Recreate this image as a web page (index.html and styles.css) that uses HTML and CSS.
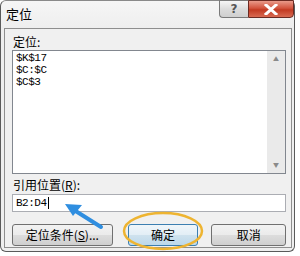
FILE: index.html
```html
<!DOCTYPE html>
<html lang="zh-CN">
<head>
    <meta charset="UTF-8">
    <title>定位</title>
    <link rel="stylesheet" href="styles.css">
</head>
<body>
    <div class="window">
        <div class="titlebar">
            <span class="title">定位</span>
            <div class="caption-buttons">
                <div class="btn-help">?</div>
                <div class="btn-close">
                    <svg width="14" height="11" viewBox="0 0 14 11">
                        <path d="M2 1 L12 10 M12 1 L2 10" stroke="#ffffff" stroke-width="3" stroke-linecap="square"/>
                    </svg>
                </div>
            </div>
        </div>
        <div class="client">
            <div class="label first">定位:</div>
            <div class="listbox">
                <div class="list-items">
                    <div>$K$17</div>
                    <div>$C:$C</div>
                    <div>$C$3</div>
                </div>
                <div class="scrollbar">
                    <span class="arrow">&#9650;</span>
                    <span class="arrow">&#9660;</span>
                </div>
            </div>
            <div class="label">引用位置(<u>R</u>):</div>
            <div class="textbox">B2:D4<span class="caret"></span></div>
            <div class="buttons">
                <div class="button wide">定位条件(<u>S</u>)...</div>
                <div class="button ok">确定</div>
                <div class="button cancel">取消</div>
            </div>
        </div>

        <!-- annotations drawn over the dialog -->
        <svg class="marks" width="295" height="252" viewBox="0 0 295 252">
            <ellipse cx="163" cy="231" rx="39" ry="18" fill="none" stroke="#eeb431" stroke-width="2.5"/>
            <path d="M101 227 L74 210" stroke="#2f8ee0" stroke-width="4" stroke-linecap="round"/>
            <path d="M65 204 L82 205 L73 216 Z" fill="#2f8ee0"/>
        </svg>
    </div>
</body>
</html>
```

FILE: styles.css
```css
body {
    margin: 0;
    background: #ffffff;
    font-family: "Noto Sans CJK SC", "Liberation Sans", sans-serif;
    font-size: 12px;
    color: #000;
}
.window {
    position: relative;
    width: 295px;
    height: 252px;
    box-sizing: border-box;
    border: 1px solid #5a5a5a;
    border-top-color: #8a8a8a;
    border-radius: 6px;
    background: linear-gradient(#f6f6f6, #eeeeee 28px);
    display: flex;
    flex-direction: column;
}
.titlebar {
    height: 27px;
    display: flex;
    justify-content: space-between;
    align-items: flex-start;
}
.title {
    padding: 5px 0 0 5px;
    font-size: 13px;
    line-height: 16px;
}
.caption-buttons {
    display: flex;
    margin-top: -1px;
}
.btn-help {
    width: 29px;
    height: 18px;
    box-sizing: border-box;
    border: 1px solid #7a7a7a;
    border-right: none;
    border-radius: 0 0 0 4px;
    background: linear-gradient(#f6f6f6, #dcdcdc 50%, #cfcfcf);
    color: #555;
    font-family: "DejaVu Sans", sans-serif;
    font-size: 12px;
    font-weight: bold;
    text-align: center;
    line-height: 17px;
}
.btn-close {
    width: 46px;
    height: 18px;
    box-sizing: border-box;
    border: 1px solid #6b2a22;
    border-radius: 0 0 4px 0;
    background: linear-gradient(#e99a8a, #d2533d 45%, #c23a22 55%, #d86a52);
    display: flex;
    align-items: center;
    justify-content: center;
}
.client {
    flex: 1;
    margin: 0 2px 3px 3px;
    border: 1px solid #8e8e8e;
    background: #f0f0f0;
    padding: 0 5px 0 7px;
    display: flex;
    flex-direction: column;
}
.label {
    height: 17px;
    line-height: 17px;
    margin-top: 2px;
    padding-left: 1px;
}
.label.first {
    margin-top: 4px;
}
.listbox {
    height: 124px;
    box-sizing: border-box;
    border: 1px solid #82878f;
    background: #fff;
    display: flex;
}
.list-items {
    flex: 1;
    padding: 1px 0 0 3px;
    font-family: "Liberation Mono", "DejaVu Sans Mono", monospace;
    font-size: 11px;
    letter-spacing: -0.5px;
    line-height: 12px;
}
.scrollbar {
    width: 18px;
    background: #eaeaea;
    display: flex;
    flex-direction: column;
    justify-content: space-between;
    align-items: center;
    padding: 4px 0;
}
.arrow {
    color: #8a8a8a;
    font-size: 6px;
    line-height: 8px;
}
.textbox {
    height: 18px;
    box-sizing: border-box;
    border: 1px solid #abadb3;
    background: #fff;
    margin-top: 1px;
    padding-left: 3px;
    font-family: "Liberation Mono", "DejaVu Sans Mono", monospace;
    font-size: 11px;
    letter-spacing: -0.5px;
    line-height: 16px;
    display: flex;
    align-items: center;
}
.caret {
    width: 1px;
    height: 12px;
    background: #000;
    margin-left: 1px;
}
.buttons {
    display: flex;
    margin-top: 12px;
}
.button {
    height: 22px;
    box-sizing: border-box;
    border: 1px solid #707070;
    border-radius: 3px;
    background: linear-gradient(#f2f2f2, #ebebeb 50%, #dddddd 50%, #cfcfcf);
    text-align: center;
    line-height: 20px;
}
.button.wide {
    width: 101px;
}
.button.ok {
    width: 71px;
    margin-left: 15px;
    border-color: #3c7fb1;
    background: linear-gradient(#f0f6fa, #e2eef6 50%, #cfe2ee 50%, #bcd8ea);
}
.button.cancel {
    width: 75px;
    margin-left: 13px;
}
.marks {
    position: absolute;
    left: -1px;
    top: -1px;
    pointer-events: none;
}
```
